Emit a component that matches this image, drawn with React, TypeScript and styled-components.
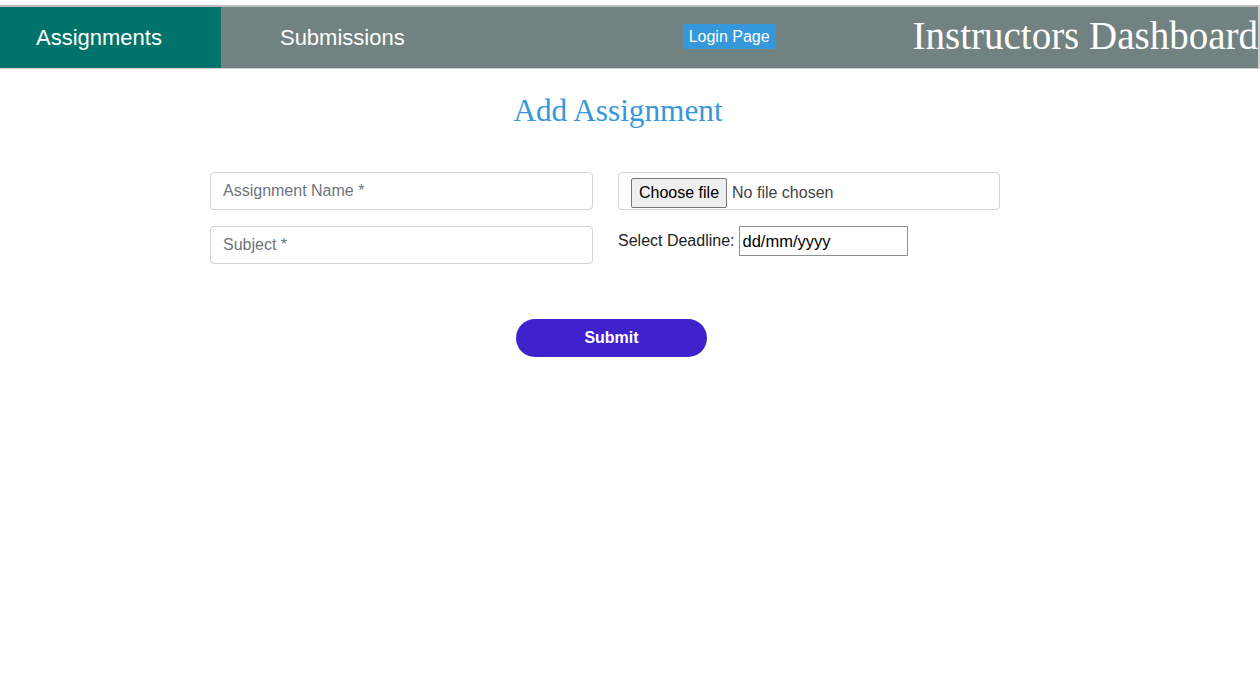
import React from 'react';
import styled, { createGlobalStyle } from 'styled-components';

const GlobalStyle = createGlobalStyle`
  body {
    margin: 0;
    background: #fff;
    font-family: "Liberation Sans", Arial, sans-serif;
  }
`;

const NavBar = styled.nav`
  margin-top: 5px;
  height: 64px;
  box-sizing: border-box;
  display: flex;
  align-items: stretch;
  background: #728280;
  border-top: 2px solid #bdbdbd;
  border-bottom: 1px solid #cfcfcf;
  border-right: 2px solid #cfcfcf;
  overflow: hidden;
`;

const Tab = styled.a<{ $active?: boolean }>`
  display: flex;
  align-items: center;
  padding: 0 59px 0 36px;
  margin-right: 23px;
  font-size: 22px;
  color: #fff;
  text-decoration: none;
  background: ${(p) => (p.$active ? '#00736a' : 'transparent')};
`;

const LoginButton = styled.button`
  align-self: center;
  margin-left: 196px;
  margin-top: -3px;
  padding: 4px 6px 3px;
  border: none;
  background: #3498db;
  color: #fff;
  font-family: "Liberation Sans", Arial, sans-serif;
  font-size: 16px;
  cursor: pointer;
`;

const Title = styled.h2`
  margin: -4px 0 0 auto;
  align-self: center;
  font-family: "Liberation Serif", "Times New Roman", serif;
  font-weight: normal;
  font-size: 39px;
  color: #fff;
  white-space: nowrap;
`;

const Heading = styled.h1`
  width: 1236px;
  margin: 24px 0 0;
  text-align: center;
  font-family: "Liberation Serif", "Times New Roman", serif;
  font-weight: normal;
  font-size: 31.25px;
  color: #3498db;
`;

const Form = styled.form`
  width: 790px;
  margin: 43px 0 0 210px;
`;

const Grid = styled.div`
  display: grid;
  grid-template-columns: 383px 382px;
  column-gap: 25px;
  row-gap: 16px;
`;

const TextInput = styled.input`
  height: 38px;
  box-sizing: border-box;
  padding: 0 12px;
  border: 1px solid #ced4da;
  border-radius: 4px;
  font-family: "Liberation Sans", Arial, sans-serif;
  font-size: 16px;
  color: #495057;
  &::placeholder {
    color: #6c757d;
  }
`;

const FileBox = styled.label`
  height: 38px;
  box-sizing: border-box;
  display: flex;
  align-items: center;
  gap: 5px;
  padding: 3px 12px 0;
  border: 1px solid #ced4da;
  border-radius: 4px;
  font-size: 16px;
  color: #444;
  cursor: pointer;

  input {
    display: none;
  }
`;

const FileButton = styled.span`
  height: 30px;
  box-sizing: border-box;
  display: flex;
  align-items: center;
  padding: 0 7px;
  color: #000;
  background: #efefef;
  border: 1px solid #767676;
  border-radius: 2px;
`;

const DeadlineRow = styled.label`
  display: flex;
  align-items: flex-start;
  gap: 4px;
  font-size: 16px;
  color: #222;
  line-height: 29px;
`;

const DateInput = styled.input`
  width: 169px;
  height: 30px;
  box-sizing: border-box;
  padding: 0 3px;
  border: 1px solid #8f8f8f;
  font-family: "Liberation Sans", Arial, sans-serif;
  font-size: 16.5px;
  &::placeholder {
    color: #000;
  }
`;

const Actions = styled.div`
  display: flex;
  justify-content: center;
  padding-left: 13px;
  margin-top: 55px;
`;

const SubmitButton = styled.button`
  width: 191px;
  height: 38px;
  border: none;
  border-radius: 19px;
  background: #3f22cc;
  color: #fff;
  font-family: "Liberation Sans", Arial, sans-serif;
  font-weight: bold;
  font-size: 16px;
  cursor: pointer;
`;

export default function App() {
  return (
    <>
      <GlobalStyle />
      <NavBar>
        <Tab $active href="#">Assignments</Tab>
        <Tab href="#">Submissions</Tab>
        <LoginButton type="button">Login Page</LoginButton>
        <Title>Instructors Dashboard</Title>
      </NavBar>
      <Heading>Add Assignment</Heading>
      <Form onSubmit={(e) => e.preventDefault()}>
        <Grid>
          <TextInput placeholder="Assignment Name *" />
          <FileBox>
            <input type="file" />
            <FileButton>Choose file</FileButton>
            No file chosen
          </FileBox>
          <TextInput placeholder="Subject *" />
          <DeadlineRow>
            Select Deadline:
            <DateInput placeholder="dd/mm/yyyy" />
          </DeadlineRow>
        </Grid>
        <Actions>
          <SubmitButton type="submit">Submit</SubmitButton>
        </Actions>
      </Form>
    </>
  );
}
